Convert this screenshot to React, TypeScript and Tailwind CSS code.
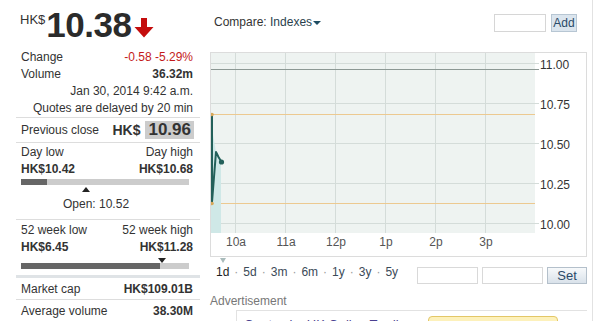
const xTicks = ['10a', '11a', '12p', '1p', '2p', '3p']
const yTicks = ['11.00', '10.75', '10.50', '10.25', '10.00']
const ranges = ['1d', '5d', '3m', '6m', '1y', '3y', '5y']

function Row({ label, value, bold = '', valueClass = '' }: { label?: string; value: string; bold?: string; valueClass?: string }) {
  return (
    <div className={`flex h-[17px] items-center justify-between pl-[5px] pr-[7px] leading-[17px] ${bold}`}>
      <span>{label}</span>
      <span className={valueClass}>{value}</span>
    </div>
  )
}

function QuotePanel() {
  return (
    <div className="ml-[16px] w-[184px] shrink-0">
      <div className="flex h-[49px] items-start pl-[4px] pt-[7px]">
        <span className="mt-[5px] text-[13px] leading-[15px]">HK$</span>
        <span className="ml-[1px] text-[35px] font-bold leading-[35px] tracking-[-0.5px] text-[#2b2b2b]">10.38</span>
        <svg width="20" height="20" viewBox="0 0 20 20" className="ml-[3px] mt-[11px]">
          <path d="M7 0h6v9h6.5L10 19.5 0.5 9H7z" fill="#c40d0d" />
        </svg>
      </div>

      <div className="border-b border-[#dddddd]">
        <Row label="Change" value="-0.58 -5.29%" valueClass="text-[#c41a1a]" />
        <Row label="Volume" value="36.32m" valueClass="font-bold" />
        <Row value="Jan 30, 2014 9:42 a.m." />
        <Row value="Quotes are delayed by 20 min" />
      </div>

      <div className="flex h-[25px] items-center justify-between border-b border-[#dddddd] pl-[5px] pr-[6px]">
        <span>Previous close</span>
        <span className="flex items-center">
          <span className="text-[14px] font-bold">HK$</span>
          <span className="ml-[5px] bg-[#cccccc] px-[3px] text-[17px] font-bold leading-[18px] text-[#333]">10.96</span>
        </span>
      </div>

      <div className="border-b border-[#dddddd] pt-[1px] pb-[6px]">
        <Row label="Day low" value="Day high" />
        <Row label="HK$10.42" value="HK$10.68" bold="font-bold" />
        <div className="mx-[5px] mt-[1px] flex h-[6px] w-[168px] bg-[#cccccc]">
          <div className="w-[26px] bg-[#666666]" />
        </div>
        <div className="ml-[66px] mt-[2px] h-0 w-0 border-x-[4px] border-b-[5px] border-x-transparent border-b-[#222]" />
        <div className="ml-[47px] mt-[4px] leading-[17px]">Open: 10.52</div>
      </div>

      <div className="border-b-[3px] border-[#dfe3e6] pt-[2px] pb-[6px]">
        <Row label="52 week low" value="52 week high" />
        <Row label="HK$6.45" value="HK$11.28" bold="font-bold" />
        <div className="ml-[142px] mt-[2px] h-0 w-0 border-x-[4px] border-t-[5px] border-x-transparent border-t-[#222]" />
        <div className="mx-[5px] flex h-[6px] w-[168px] bg-[#cccccc]">
          <div className="w-[139px] bg-[#666666]" />
        </div>
      </div>

      <div className="border-b border-[#dddddd] pt-[3px] pb-[1px]">
        <Row label="Market cap" value="HK$109.01B" valueClass="font-bold" />
      </div>
      <div className="border-b border-[#dddddd] pt-[3px] pb-[1px]">
        <Row label="Average volume" value="38.30M" valueClass="font-bold" />
      </div>
    </div>
  )
}

function PriceChart() {
  const vLines = [24, 74, 124, 174, 224, 274]
  const hLines = [10, 50, 90, 130, 170]
  return (
    <svg width={328} height={180} className="block shrink-0">
      <rect x={0} y={0} width={324} height={180} fill="#eef3f1" />
      {vLines.map((x) => (
        <line key={x} x1={x + 0.5} y1={0} x2={x + 0.5} y2={180} stroke="#d4dcd9" />
      ))}
      {hLines.map((y) => (
        <line key={y} x1={0} y1={y + 0.5} x2={328} y2={y + 0.5} stroke="#d4dcd9" />
      ))}
      <line x1={0} y1={16.5} x2={328} y2={16.5} stroke="#8c9894" />
      <line x1={0} y1={61.5} x2={324} y2={61.5} stroke="#ecc990" />
      <line x1={0} y1={150.5} x2={324} y2={150.5} stroke="#ecc990" />
      <polygon points="0,70 5,99 7,104 10,109 10,180 0,180" fill="#cfe8e7" />
      <polyline
        points="1,61 1,149 5,99 7.5,104 10.5,109"
        fill="none"
        stroke="#23605a"
        strokeWidth={2}
        strokeLinejoin="round"
      />
      <circle cx={1} cy={61.5} r={1.8} fill="#d8a85a" />
      <circle cx={1} cy={150.5} r={1.8} fill="#d8a85a" />
      <circle cx={10.5} cy={109} r={2.6} fill="#23605a" />
    </svg>
  )
}

function ChartPanel() {
  return (
    <div className="ml-[10px] flex w-[377px] shrink-0 flex-col">
      <div className="flex h-[52px] shrink-0 items-start justify-between pl-[4px] pr-[10px] pt-[14px]">
        <span className="flex items-center text-[12px] leading-[17px]">
          Compare:&nbsp;<span className="text-[#2a3f4d]">Indexes</span>
          <span className="ml-[1px] h-0 w-0 border-x-[4px] border-t-[4px] border-x-transparent border-t-[#1e4d62]" />
        </span>
        <span className="flex items-start gap-[5px]">
          <span className="h-[18px] w-[52px] border border-[#d6d6d6] bg-white" />
          <button className="h-[18px] w-[26px] border border-[#b7c6d3] bg-[#dbe5ee] text-[12px] leading-[16px] text-[#2a4a68]">
            Add
          </button>
        </span>
      </div>

      <div className="h-[205px] shrink-0 border border-[#dcdcdc]">
        <div className="flex h-[180px]">
          <PriceChart />
          <div className="flex flex-col gap-[26px] pl-[1px] pt-[5px] text-[12px] leading-[14px] text-[#333]">
            {yTicks.map((t) => (
              <span key={t}>{t}</span>
            ))}
          </div>
        </div>
        <div className="flex h-[23px] pt-[2px] text-[12px] leading-[14px] text-[#555]">
          {xTicks.map((t) => (
            <span key={t} className="w-[50px] text-center">
              {t}
            </span>
          ))}
        </div>
      </div>

      <div className="ml-[10px] mt-[1px] h-0 w-0 shrink-0 border-x-[3px] border-t-[5px] border-x-transparent border-t-[#a9bbbb]" />
      <div className="mt-[2px] flex shrink-0 items-start justify-between">
        <div className="flex pl-[6px] text-[12px] leading-[14px] text-[#3b4a58]">
          {ranges.map((r, i) => (
            <span key={r} className="flex">
              {i > 0 && <span className="mx-[5px] text-[#999]">·</span>}
              <span className={i === 0 ? 'text-[#1e1e1e]' : ''}>{r}</span>
            </span>
          ))}
        </div>
        <div className="mt-[2px] flex gap-[4px]">
          <span className="h-[17px] w-[61px] border border-[#d9d9d9]" />
          <span className="h-[17px] w-[61px] border border-[#d9d9d9]" />
          <button className="h-[17px] w-[40px] border border-[#b4c0cb] bg-gradient-to-b from-[#f7f9fb] to-[#d9e2ea] text-[13px] leading-[15px] text-[#2b4a68]">
            Set
          </button>
        </div>
      </div>

      <div className="mt-[10px] shrink-0 text-[12px] leading-[14px] text-[#777]">Advertisement</div>
      <div className="ml-[26px] mt-[2px] flex h-[40px] shrink-0 items-start border-l border-t border-[#e2e2e2] pl-[7px] pt-[5px]">
        <span className="mt-[1px] w-[180px] whitespace-nowrap text-[13px] leading-[16px] text-[#4a3f8f]">Quotes by HK Online Trading</span>
        <span className="ml-[4px] h-[30px] w-[130px] whitespace-nowrap rounded-t-[4px] border border-[#e3c767] bg-[#fdf1bb] pt-[1px] text-center text-[13px] leading-[16px] text-[#333]">
          Open an Account
        </span>
      </div>
    </div>
  )
}

export default function App() {
  return (
    <div className="flex h-[321px] w-[597px] overflow-hidden bg-white font-['Liberation_Sans',Arial,sans-serif] text-[12px] text-[#333]">
      <QuotePanel />
      <ChartPanel />
      <div className="ml-[5px] w-px shrink-0 bg-[#e2e2e2]" />
    </div>
  )
}
